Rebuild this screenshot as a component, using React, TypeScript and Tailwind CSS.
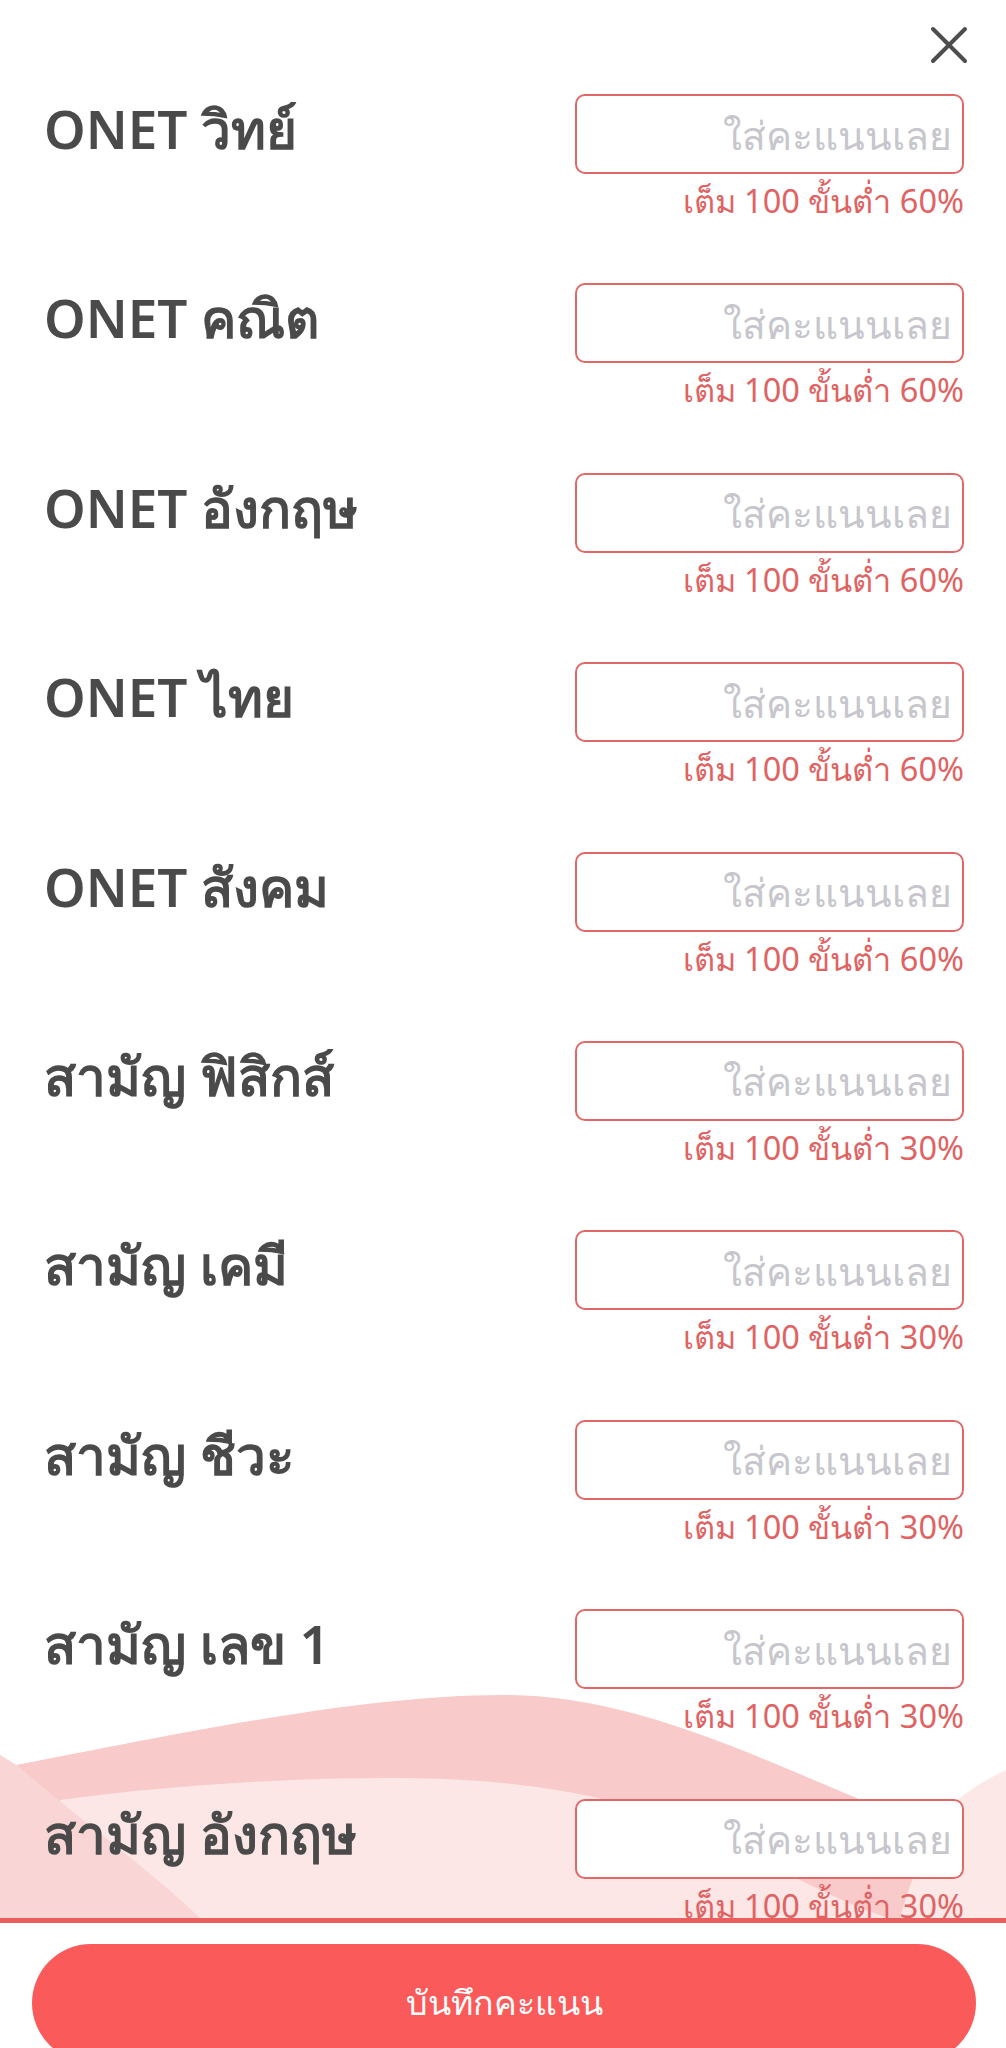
const subjects = [
  { name: 'ONET วิทย์', min: 60 },
  { name: 'ONET คณิต', min: 60 },
  { name: 'ONET อังกฤษ', min: 60 },
  { name: 'ONET ไทย', min: 60 },
  { name: 'ONET สังคม', min: 60 },
  { name: 'สามัญ ฟิสิกส์', min: 30 },
  { name: 'สามัญ เคมี', min: 30 },
  { name: 'สามัญ ชีวะ', min: 30 },
  { name: 'สามัญ เลข 1', min: 30 },
  { name: 'สามัญ อังกฤษ', min: 30 },
];

const Waves = () => (
  <svg
    className="absolute left-0 bottom-0 w-[1006px] h-[238px]"
    viewBox="0 1680 1006 238"
    preserveAspectRatio="none"
  >
    <path
      d="M0,1768 C150,1740 350,1695 503,1695 C640,1695 760,1760 903,1817 C950,1840 990,1880 1006,1900 L1006,1918 L0,1918 Z"
      fill="#f8caca"
    />
    <path
      d="M60,1800 C200,1780 400,1772 503,1783 C620,1795 680,1820 760,1860 C820,1890 860,1910 890,1918 L60,1918 Z"
      fill="#fde6e6"
    />
    <path d="M1006,1770 C985,1780 970,1790 960,1798 C930,1830 910,1880 900,1918 L1006,1918 Z" fill="#fde8e8" />
    <path d="M0,1755 L18,1766 C80,1820 150,1870 200,1918 L0,1918 Z" fill="#f9d5d5" />
  </svg>
);

const ScoreRow = ({ name, min }: { name: string; min: number }) => (
  <div className="relative flex h-[189.4px] items-start justify-between pl-[44px] pr-[42px]">
    <div className="mt-[8px] text-[53px] leading-none font-semibold text-[#4a4a4a]">{name}</div>
    <div className="flex flex-col items-end">
      <input
        type="text"
        placeholder="ใส่คะแนนเลย"
        className="h-[80px] w-[389px] rounded-[10px] border-2 border-[#e26868] bg-white pr-[10px] text-right text-[39px] text-[#4a4a4a] outline-none placeholder:text-[#c6c6cc]"
      />
      <div className="mt-[11px] text-[32.5px] leading-none text-[#e06363]">
        เต็ม 100 ขั้นต่ำ {min}%
      </div>
    </div>
  </div>
);

export default function App() {
  return (
    <div
      className="flex h-[2048px] w-full flex-col overflow-hidden bg-white"
      style={{ fontFamily: '"Noto Sans", "Open Sans", sans-serif' }}
    >
      <div className="relative h-[1918px] shrink-0 overflow-hidden">
        <Waves />
        <div className="relative">
          <div className="flex h-[94px] justify-end pr-[38px] pt-[26px]">
            <button type="button" aria-label="close" className="h-[38px] w-[38px]">
              <svg width="38" height="38" viewBox="0 0 38 38" fill="none" stroke="#4d4d4d" strokeWidth="4" strokeLinecap="round">
                <path d="M3 3 L35 35 M35 3 L3 35" />
              </svg>
            </button>
          </div>
          {subjects.map((s) => (
            <ScoreRow key={s.name} name={s.name} min={s.min} />
          ))}
        </div>
      </div>
      <div className="h-[5px] shrink-0 bg-[#eb5e5e]" />
      <div className="pl-[32px] pt-[21px]">
        <button
          type="button"
          className="flex h-[118px] w-[944px] items-center justify-center rounded-full bg-[#fb5a5a] pb-[2px] text-[34px] text-white"
        >
          บันทึกคะแนน
        </button>
      </div>
    </div>
  );
}
